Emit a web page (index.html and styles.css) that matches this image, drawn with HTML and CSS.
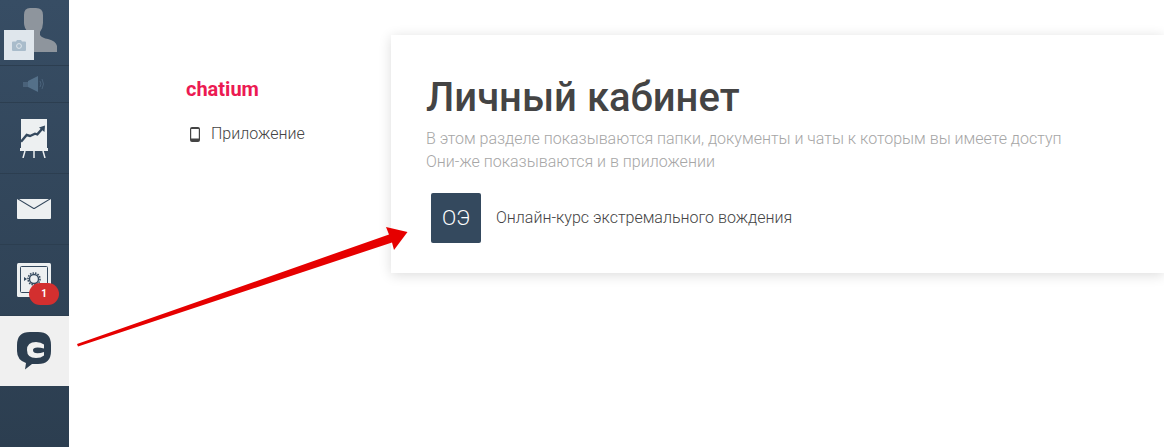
FILE: index.html
```html
<!DOCTYPE html>
<html lang="ru">
<head>
    <meta charset="UTF-8">
    <title>Личный кабинет</title>
    <link rel="stylesheet" href="styles.css">
</head>
<body>
    <div class="page">
        <div class="sidebar">
            <div class="side-item avatar-item">
                <svg class="avatar" viewBox="0 0 34 44" width="34" height="44">
                    <path d="M7 0 L13 0 Q20 0 20 7 L20 15 Q20 20 17 24 L17 27 Q19 30 25 31 Q33 33 34 38 L34 44 L0 44 L0 36 Q5 32 5 27 L5 24 Q1 20 1 15 L1 7 Q1 0 7 0 Z" fill="#8e959d"/>
                </svg>
                <div class="camera-box">
                    <svg viewBox="0 0 14 11" width="14" height="11">
                        <path d="M0 2.5 Q0 1.5 1 1.5 L4 1.5 L5 0 L9 0 L10 1.5 L13 1.5 Q14 1.5 14 2.5 L14 10 Q14 11 13 11 L1 11 Q0 11 0 10 Z" fill="#a9bccb"/>
                        <circle cx="7" cy="6" r="2.4" fill="none" stroke="#dfe6ec" stroke-width="1"/>
                    </svg>
                </div>
            </div>
            <div class="side-item sound-item">
                <svg viewBox="0 0 22 16" width="22" height="16">
                    <rect x="0" y="6" width="5" height="5" fill="#4a627a"/>
                    <path d="M5 5 L15 0 L15 16 L5 11 Z" fill="#547089"/>
                    <path d="M17 5 Q19 8 17 11 M19 3 Q22 8 19 13" fill="none" stroke="#4a627a" stroke-width="1"/>
                </svg>
            </div>
            <div class="side-item">
                <svg viewBox="0 0 28 39" width="28" height="39">
                    <path d="M1 0 L27 0 L27 29 L1 29 Z" fill="#edf0f1"/>
                    <path d="M1 22.7 L6.7 16 L10 17 L15 14.7 L17.3 15.3 L22 10" fill="none" stroke="#34495e" stroke-width="2.4"/>
                    <path d="M19 8.5 L25 6.5 L24.5 13 Z" fill="#34495e"/>
                    <rect x="0" y="29" width="28" height="3" fill="#edf0f1"/>
                    <path d="M5 32 L3 39 M14 32 L14 39 M23 32 L25 39" stroke="#edf0f1" stroke-width="1.5"/>
                </svg>
            </div>
            <div class="side-item">
                <svg viewBox="0 0 34 20" width="34" height="20">
                    <path d="M0 0 L16.5 10 L17.5 10 L34 0 L34 19 Q34 20 33 20 L1 20 Q0 20 0 19 Z" fill="#edf0f1"/>
                    <path d="M2 0 L32 0 L17 9 Z" fill="#edf0f1"/>
                </svg>
            </div>
            <div class="side-item">
                <svg viewBox="0 0 34 34" width="34" height="34">
                    <rect x="0" y="0" width="34" height="34" rx="1.5" fill="#edf0f1"/>
                    <rect x="3.5" y="3.5" width="27" height="26" rx="1" fill="none" stroke="#34495e" stroke-width="1"/>
                    <circle cx="17" cy="16" r="4.5" fill="none" stroke="#34495e" stroke-width="1.4"/>
                    <circle cx="17" cy="16" r="6" fill="none" stroke="#34495e" stroke-width="1.6" stroke-dasharray="1.5 1.1"/>
                    <path d="M7 14 L10 16 L7 18 Z" fill="#34495e"/>
                </svg>
                <span class="badge">1</span>
            </div>
            <div class="side-item side-active">
                <svg viewBox="0 0 34 38" width="34" height="38">
                    <path d="M13 0 L21 0 Q34 0 34 13 L34 19 Q34 32 21 32 L15 32 L8 37.5 L9 31 Q0 28 0 19 L0 13 Q0 0 13 0 Z" fill="#2c3e50"/>
                    <path d="M27 12.5 Q24 10 19 10 Q10 10 10 18 Q10 26 19 26 Q24 26 27 23.5 L27 20 Q23.5 21.3 20.5 21.3 Q16 21.3 16 18 Q16 15.4 20.5 15.4 Q23.5 15.4 27 16.5 Z" fill="#f0f0f0"/>
                </svg>
            </div>
        </div>

        <div class="nav-col">
            <div class="brand">chatium</div>
            <div class="nav-link">
                <svg viewBox="0 0 10 15" width="10" height="15">
                    <path d="M2 0 L8 0 Q10 0 10 2 L10 13 Q10 15 8 15 L2 15 Q0 15 0 13 L0 2 Q0 0 2 0 Z M1.2 2 L1.2 11.5 L8.8 11.5 L8.8 2 Z" fill="#444" fill-rule="evenodd"/>
                </svg>
                <span>Приложение</span>
            </div>
        </div>

        <div class="card">
            <h1>Личный кабинет</h1>
            <p class="card-text">В этом разделе показываются папки, документы и чаты к которым вы имеете доступ<br>Они-же показываются и в приложении</p>
            <div class="course">
                <div class="course-icon">ОЭ</div>
                <div class="course-name">Онлайн-курс экстремального вождения</div>
            </div>
        </div>
    </div>

    <!-- стрелка поверх страницы -->
    <svg class="arrow" viewBox="0 0 1164 447" width="1164" height="447">
        <path d="M77 344 L389 234.5 L386 227 L407.5 232 L394 250 L392 242.5 L78 346.5 Z" fill="#e60000"/>
    </svg>
</body>
</html>
```

FILE: styles.css
```css
* {
    box-sizing: border-box;
}
html, body {
    margin: 0;
    height: 100%;
    overflow: hidden;
    background-color: white;
}
body {
    font-family: Roboto, "Liberation Sans", sans-serif;
}
.page {
    display: flex;
    height: 447px;
}
.sidebar {
    width: 69px;
    flex-shrink: 0;
    background: linear-gradient(#374d64, #2c3e50);
}
.side-item {
    position: relative;
    height: 71px;
    padding-right: 1px;
    display: flex;
    align-items: center;
    justify-content: center;
    border-bottom: 1px solid #2c3e50;
}
.avatar-item {
    height: 66px;
    align-items: flex-end;
    justify-content: flex-start;
    padding-left: 23px;
}
.avatar {
    margin-bottom: 13px;
}
.camera-box {
    position: absolute;
    left: 4px;
    top: 30px;
    width: 30px;
    height: 30px;
    background-color: #dfe6ec;
    display: flex;
    align-items: center;
    justify-content: center;
}
.sound-item {
    height: 37px;
}
.side-active {
    height: 70px;
    background-color: #f0f0f0;
    border-bottom: none;
}
.badge {
    position: absolute;
    left: 29px;
    top: 38px;
    width: 30px;
    height: 22px;
    border-radius: 11px;
    background-color: #d32f2f;
    color: white;
    font-size: 10px;
    font-weight: 700;
    line-height: 22px;
    text-align: center;
}
.nav-col {
    width: 322px;
    flex-shrink: 0;
    padding: 77px 0 0 117px;
}
.brand {
    color: #ec1a52;
    font-size: 20px;
    font-weight: 700;
    line-height: 24px;
}
.nav-link {
    display: flex;
    align-items: center;
    gap: 11px;
    margin: 23px 0 0 4px;
    color: #444;
    font-size: 16px;
    font-weight: 300;
    line-height: 20px;
}
.card {
    flex-grow: 1;
    height: 238px;
    margin-top: 35px;
    padding: 37px 35px 0;
    background-color: white;
    box-shadow: 0 2px 12px rgba(0,0,0,0.14);
}
h1 {
    margin: 0;
    color: #444;
    font-size: 40px;
    font-weight: 500;
    line-height: 52px;
}
.card-text {
    margin: 3px 0 0;
    color: #a6a6a6;
    font-size: 16px;
    font-weight: 300;
    line-height: 23px;
}
.course {
    display: flex;
    align-items: center;
    gap: 15px;
    margin: 20px 0 0 5px;
}
.course-icon {
    width: 50px;
    height: 50px;
    border-radius: 2px;
    background-color: #34495e;
    color: white;
    font-size: 21px;
    font-weight: 300;
    line-height: 50px;
    text-align: center;
}
.course-name {
    margin-bottom: 2px;
    color: #444;
    font-size: 16px;
    font-weight: 300;
}
.arrow {
    position: absolute;
    left: 0;
    top: 0;
    pointer-events: none;
}
```
